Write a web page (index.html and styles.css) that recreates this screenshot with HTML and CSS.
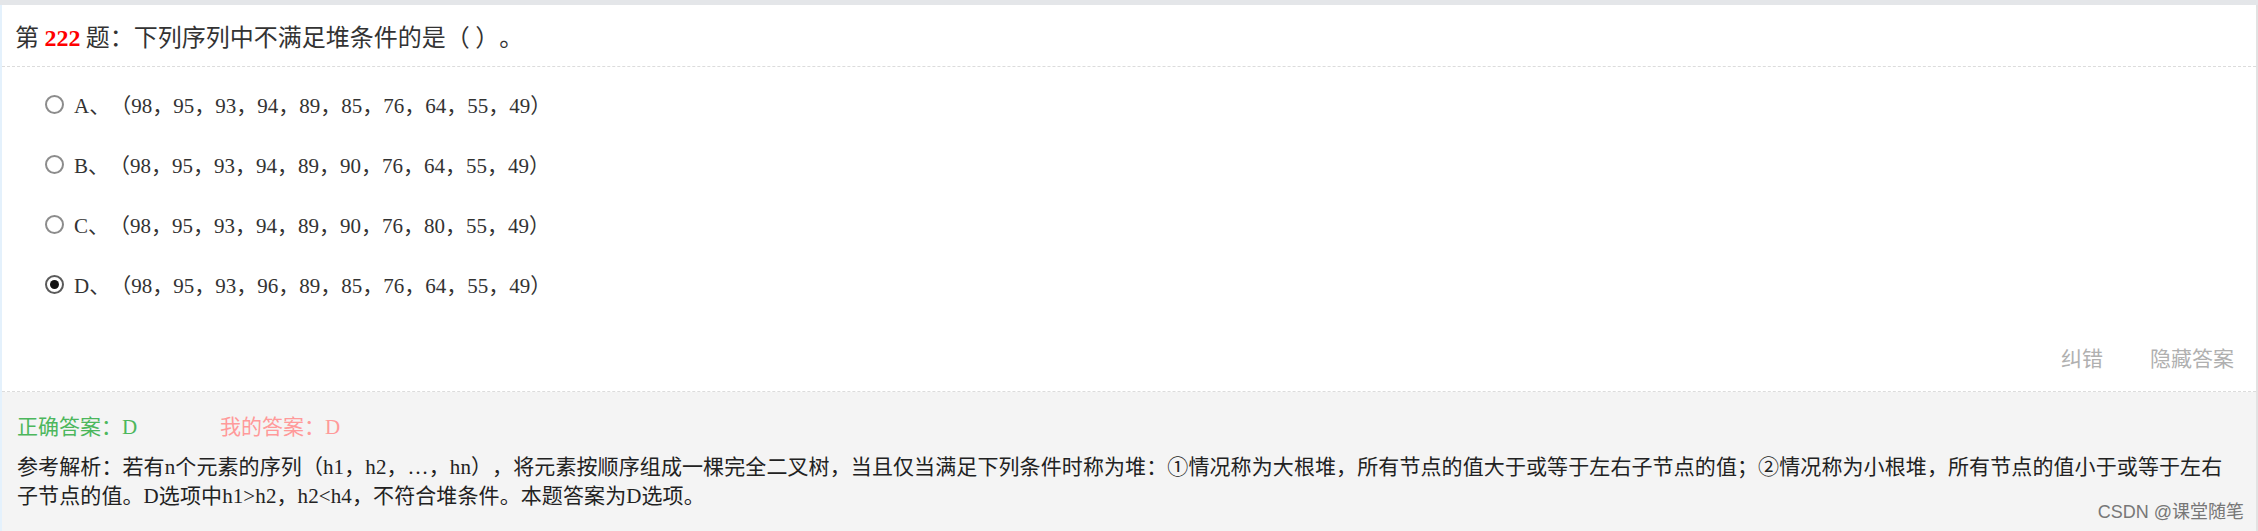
FILE: index.html
```html
<!DOCTYPE html>
<html lang="zh-CN">
<head>
<meta charset="utf-8">
<title>第 222 题</title>
<link rel="stylesheet" href="styles.css">
</head>
<body>
<div class="topbar"></div>
<div class="card">
  <div class="q-title">第 <span class="q-num">222</span> 题：下列序列中不满足堆条件的是（ ）。</div>
  <ul class="options">
    <li class="option"><span class="radio"></span><span class="opt-text">A、（98，95，93，94，89，85，76，64，55，49）</span></li>
    <li class="option"><span class="radio"></span><span class="opt-text">B、（98，95，93，94，89，90，76，64，55，49）</span></li>
    <li class="option"><span class="radio"></span><span class="opt-text">C、（98，95，93，94，89，90，76，80，55，49）</span></li>
    <li class="option"><span class="radio checked"></span><span class="opt-text">D、（98，95，93，96，89，85，76，64，55，49）</span></li>
  </ul>
  <div class="actions">
    <span class="action">纠错</span>
    <span class="action">隐藏答案</span>
  </div>
  <div class="answer">
    <div class="answer-row">
      <span class="right-ans">正确答案：D</span>
      <span class="my-ans">我的答案：D</span>
    </div>
    <p class="analysis">参考解析：若有n个元素的序列（h1，h2，…，hn），将元素按顺序组成一棵完全二叉树，当且仅当满足下列条件时称为堆：①情况称为大根堆，所有节点的值大于或等于左右子节点的值；②情况称为小根堆，所有节点的值小于或等于左右子节点的值。D选项中h1&gt;h2，h2&lt;h4，不符合堆条件。本题答案为D选项。</p>
    <span class="watermark">CSDN @课堂随笔</span>
  </div>
</div>
</body>
</html>
```
FILE: styles.css
```css
html, body {
  margin: 0;
  padding: 0;
  background: #ffffff;
}
body {
  width: 2258px;
  height: 531px;
  overflow: hidden;
  font-family: "Liberation Serif", "Noto Sans CJK SC", serif;
  color: #333333;
  text-spacing-trim: space-all;
}
.topbar {
  height: 5px;
  background: #e4e6e9;
}
.card {
  border-left: 2px solid #e4f1fc;
  border-right: 2px solid #e2e2e2;
  height: 526px;
  display: flex;
  flex-direction: column;
}
.q-title {
  font-family: "Noto Sans CJK SC", sans-serif;
  font-size: 24px;
  line-height: 61px;
  height: 61px;
  padding-left: 13px;
  color: #333333;
  border-bottom: 1px dashed #dcdcdc;
}
.q-num {
  font-family: "Liberation Serif", serif;
  font-weight: bold;
  color: #ff0000;
}
.options {
  list-style: none;
  margin: 0;
  padding: 7px 0 0 43px;
}
.option {
  display: flex;
  align-items: center;
  height: 60px;
  gap: 10px;
  font-size: 21px;
  color: #333333;
}
.radio {
  box-sizing: border-box;
  width: 19px;
  height: 19px;
  border: 2px solid #8c8c8c;
  border-radius: 50%;
  background: #ffffff;
  display: flex;
  align-items: center;
  justify-content: center;
}
.radio.checked {
  border-color: #5a5a5a;
}
.radio.checked::after {
  content: "";
  width: 9px;
  height: 9px;
  border-radius: 50%;
  background: #111111;
}
.actions {
  display: flex;
  justify-content: flex-end;
  gap: 47px;
  padding: 28px 22px 19px 0;
  line-height: 30px;
  font-family: "Noto Sans CJK SC", sans-serif;
  font-size: 21px;
  color: #b0b0b0;
  border-bottom: 1px dashed #dcdcdc;
}
.answer {
  flex: 1;
  background: #f4f4f4;
  padding: 20px 15px 0 15px;
  position: relative;
  font-size: 21px;
}
.answer-row {
  line-height: 30px;
  display: flex;
}
.right-ans {
  width: 203px;
  color: #4cb75c;
}
.my-ans {
  color: #ff9a9a;
}
.analysis {
  margin: 11px 0 0 0;
  line-height: 29px;
  color: #222222;
  padding-right: 14px;
  letter-spacing: 0.1px;
}
.watermark {
  position: absolute;
  right: 12px;
  bottom: 8px;
  font-family: "Liberation Sans", "Noto Sans CJK SC", sans-serif;
  font-size: 18px;
  line-height: 22px;
  color: #777777;
}
```
